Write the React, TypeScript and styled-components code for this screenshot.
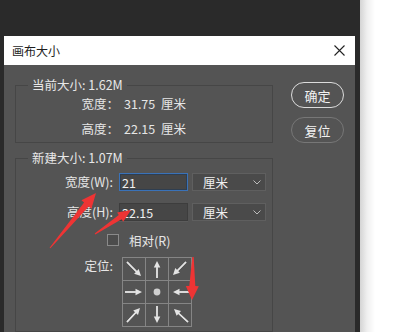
import React from 'react';
import styled, { createGlobalStyle } from 'styled-components';

const GlobalStyle = createGlobalStyle`
  html, body { margin: 0; padding: 0; }
  body {
    width: 406px;
    height: 332px;
    overflow: hidden;
    background: #fff;
    font-family: "Noto Sans CJK SC", "Noto Sans", sans-serif;
  }
`;

const FONT = `"Noto Sans CJK SC", "Noto Sans", sans-serif`;

const Page = styled.div`
  position: relative;
  display: flex;
  width: 406px;
  height: 332px;
  overflow: hidden;
`;

const Backdrop = styled.div`
  flex: none;
  width: 360px;
  height: 332px;
  box-sizing: border-box;
  padding: 36px 5px 0 4px;
  background: #2a2a2a;
`;

const WhitePane = styled.div`
  flex: 1;
  background: linear-gradient(to right, #d4d4d4 0px, #efefef 7px, #fff 15px);
`;

const Dialog = styled.div`
  height: 100%;
  display: flex;
  flex-direction: column;
  background: #545454;
`;

const TitleBar = styled.div`
  flex: none;
  height: 29px;
  display: flex;
  align-items: center;
  justify-content: space-between;
  padding: 0 10px 0 8px;
  background: #fff;
  color: #1e1e1e;
  font-size: 12px;
`;

const CloseIcon = styled.svg`
  width: 11px;
  height: 11px;
  display: block;
`;

const Body = styled.div`
  flex: 1;
  display: flex;
  gap: 18px;
  padding: 13px 0 0 11px;
  min-height: 0;
`;

const LeftCol = styled.div`
  width: 258px;
  display: flex;
  flex-direction: column;
  gap: 8px;
`;

const RightCol = styled.div`
  display: flex;
  flex-direction: column;
  gap: 9px;
  padding-top: 4px;
`;

const Group = styled.fieldset<{ $tall?: boolean }>`
  margin: 0;
  padding: ${p => (p.$tall ? '8px 0 0 0' : '0 0 3px 0')};
  border: 1px solid #464646;
  min-width: 0;
  ${p => (p.$tall ? 'height: 200px; box-sizing: border-box;' : '')}
`;

const GroupTitle = styled.legend`
  margin-left: 12px;
  padding: 0 4px;
  font-size: 12.5px;
  line-height: 14px;
  color: #e8e8e8;
`;

const InfoList = styled.div`
  display: flex;
  flex-direction: column;
  gap: 3px;
`;

const InfoRow = styled.div`
  display: flex;
  align-items: center;
  height: 22px;
  font-size: 12.5px;
  color: #e6e6e6;
`;

const InfoLabel = styled.span`
  width: 103px;
  text-align: right;
`;

const InfoValue = styled.span`
  width: 37px;
  margin-left: 5px;
`;

const FieldRow = styled.div<{ $top?: number }>`
  display: flex;
  align-items: center;
  height: 18px;
  margin-top: ${p => p.$top ?? 0}px;
  font-size: 12.5px;
  color: #e6e6e6;
`;

const FieldLabel = styled.span`
  width: 97px;
  margin-right: 6px;
  text-align: right;
  line-height: 18px;
`;

const NumberInput = styled.input<{ $focused?: boolean }>`
  width: 69px;
  height: 18px;
  box-sizing: border-box;
  margin: 0 4px 0 0;
  padding: 0 2px;
  background: #464646;
  border: 1px solid ${p => (p.$focused ? '#3a72b8' : '#3d3d3d')};
  box-shadow: ${p => (p.$focused ? 'inset 0 0 0 1px #2f3e50' : '0 1px 0 #5c5c5c')};
  color: #f0f0f0;
  font: 12.5px ${FONT};
  outline: none;
`;

const SelectBox = styled.div`
  width: 74px;
  height: 18px;
  box-sizing: border-box;
  display: flex;
  align-items: center;
  justify-content: space-between;
  padding: 0 4px 0 10px;
  background: #4a4a4a;
  border: 1px solid #5f5f5f;
  color: #f0f0f0;
`;

const Chevron = styled.svg`
  width: 8px;
  height: 5px;
  display: block;
`;

const CheckRow = styled.label`
  display: flex;
  align-items: center;
  gap: 10px;
  height: 18px;
  margin: 10px 0 0 91px;
  font-size: 12.5px;
  color: #e6e6e6;
`;

const CheckBox = styled.span`
  width: 12px;
  height: 12px;
  box-sizing: border-box;
  border: 1px solid #8a8a8a;
  background: #4c4c4c;
`;

const AnchorRow = styled.div`
  display: flex;
  align-items: flex-start;
  margin-top: 8px;
  font-size: 12.5px;
  color: #e6e6e6;
`;

const AnchorLabel = styled.span`
  width: 97px;
  margin-right: 9px;
  text-align: right;
  line-height: 18px;
`;

const AnchorGrid = styled.div`
  display: grid;
  grid-template-columns: repeat(3, 22px);
  grid-template-rows: repeat(3, 22px);
  gap: 1px;
  padding: 1px;
  background: #858585;
`;

const AnchorCell = styled.div`
  background: #545454;
  display: flex;
  align-items: center;
  justify-content: center;
`;

const CellSvg = styled.svg`
  width: 22px;
  height: 22px;
  display: block;
`;

const PillButton = styled.button<{ $primary?: boolean }>`
  width: 53px;
  height: 26px;
  box-sizing: border-box;
  border-radius: 13px;
  border: 1.5px solid ${p => (p.$primary ? '#dcdcdc' : '#777')};
  background: transparent;
  color: #f2f2f2;
  font: 13px ${FONT};
  padding: 0;
  cursor: pointer;
`;

const Overlay = styled.svg`
  position: absolute;
  left: 0;
  top: 0;
  width: 406px;
  height: 332px;
  pointer-events: none;
`;

type Pt = [number, number];

function arrowPoints(tail: Pt, tip: Pt, headLen: number, headW: number, shaftW: number, tailW: number) {
  const dx = tip[0] - tail[0];
  const dy = tip[1] - tail[1];
  const len = Math.hypot(dx, dy);
  const ux = dx / len;
  const uy = dy / len;
  const nx = -uy;
  const ny = ux;
  const bx = tip[0] - ux * headLen;
  const by = tip[1] - uy * headLen;
  const pts: Pt[] = [
    [tail[0] + (nx * tailW) / 2, tail[1] + (ny * tailW) / 2],
    [bx + (nx * shaftW) / 2, by + (ny * shaftW) / 2],
    [bx + (nx * headW) / 2, by + (ny * headW) / 2],
    tip,
    [bx - (nx * headW) / 2, by - (ny * headW) / 2],
    [bx - (nx * shaftW) / 2, by - (ny * shaftW) / 2],
    [tail[0] - (nx * tailW) / 2, tail[1] - (ny * tailW) / 2],
  ];
  return pts.map(p => `${p[0].toFixed(1)},${p[1].toFixed(1)}`).join(' ');
}

type CellArrow = { tail: Pt; tip: Pt } | 'dot';

const cells: CellArrow[] = [
  { tail: [4, 4], tip: [18, 18] },
  { tail: [11, 20], tip: [11, 3] },
  { tail: [17, 4], tip: [4, 17] },
  { tail: [2, 11], tip: [19, 11] },
  'dot',
  { tail: [21, 11], tip: [4, 11] },
  { tail: [4, 18], tip: [17, 4] },
  { tail: [11, 2], tip: [11, 19] },
  { tail: [19, 18], tip: [5, 5] },
];

function CellArrowIcon({ a }: { a: CellArrow }) {
  if (a === 'dot') {
    return (
      <CellSvg viewBox="0 0 22 22">
        <circle cx="11" cy="11" r="3.4" fill="#cfcfcf" />
      </CellSvg>
    );
  }
  const { tail, tip } = a;
  const dx = tip[0] - tail[0];
  const dy = tip[1] - tail[1];
  const len = Math.hypot(dx, dy);
  const ux = dx / len;
  const uy = dy / len;
  const hl = 6.5;
  const lx = tip[0] - ux * hl;
  const ly = tip[1] - uy * hl;
  return (
    <CellSvg viewBox="0 0 22 22">
      <line x1={tail[0]} y1={tail[1]} x2={lx} y2={ly} stroke="#e4e4e4" strokeWidth="1.4" />
      <polygon points={arrowPoints(tail, tip, hl, 6.5, 1.4, 1.4)} fill="#e4e4e4" />
    </CellSvg>
  );
}

export default function App() {
  return (
    <>
      <GlobalStyle />
      <Page>
        <Backdrop>
          <Dialog>
            <TitleBar>
              <span>画布大小</span>
              <CloseIcon viewBox="0 0 11 11">
                <path d="M0.5 0.5 L10.5 10.5 M10.5 0.5 L0.5 10.5" stroke="#222" strokeWidth="1.1" fill="none" />
              </CloseIcon>
            </TitleBar>
            <Body>
              <LeftCol>
                <Group>
                  <GroupTitle>当前大小: 1.62M</GroupTitle>
                  <InfoList>
                    <InfoRow>
                      <InfoLabel>宽度：</InfoLabel>
                      <InfoValue>31.75</InfoValue>
                      <span>厘米</span>
                    </InfoRow>
                    <InfoRow>
                      <InfoLabel>高度：</InfoLabel>
                      <InfoValue>22.15</InfoValue>
                      <span>厘米</span>
                    </InfoRow>
                  </InfoList>
                </Group>
                <Group $tall>
                  <GroupTitle>新建大小: 1.07M</GroupTitle>
                  <FieldRow>
                    <FieldLabel>宽度(W):</FieldLabel>
                    <NumberInput $focused defaultValue="21" />
                    <SelectBox>
                      <span>厘米</span>
                      <Chevron viewBox="0 0 8 5">
                        <path d="M0.5 0.5 L4 4 L7.5 0.5" stroke="#bdbdbd" strokeWidth="1" fill="none" />
                      </Chevron>
                    </SelectBox>
                  </FieldRow>
                  <FieldRow $top={12}>
                    <FieldLabel>高度(H):</FieldLabel>
                    <NumberInput defaultValue="22.15" />
                    <SelectBox>
                      <span>厘米</span>
                      <Chevron viewBox="0 0 8 5">
                        <path d="M0.5 0.5 L4 4 L7.5 0.5" stroke="#bdbdbd" strokeWidth="1" fill="none" />
                      </Chevron>
                    </SelectBox>
                  </FieldRow>
                  <CheckRow>
                    <CheckBox />
                    <span>相对(R)</span>
                  </CheckRow>
                  <AnchorRow>
                    <AnchorLabel>定位:</AnchorLabel>
                    <AnchorGrid>
                      {cells.map((c, i) => (
                        <AnchorCell key={i}>
                          <CellArrowIcon a={c} />
                        </AnchorCell>
                      ))}
                    </AnchorGrid>
                  </AnchorRow>
                </Group>
              </LeftCol>
              <RightCol>
                <PillButton $primary>确定</PillButton>
                <PillButton>复位</PillButton>
              </RightCol>
            </Body>
          </Dialog>
        </Backdrop>
        <WhitePane />
        <Overlay viewBox="0 0 406 332">
          <polygon points={arrowPoints([50, 248], [96, 193], 15, 13, 6, 1)} fill="#ee3434" />
          <polygon points={arrowPoints([95, 234], [131, 210], 13, 11, 5, 1)} fill="#ee3434" />
          <polygon points={arrowPoints([193, 257], [192, 300], 14, 13, 6, 1.5)} fill="#ee3434" />
        </Overlay>
      </Page>
    </>
  );
}
